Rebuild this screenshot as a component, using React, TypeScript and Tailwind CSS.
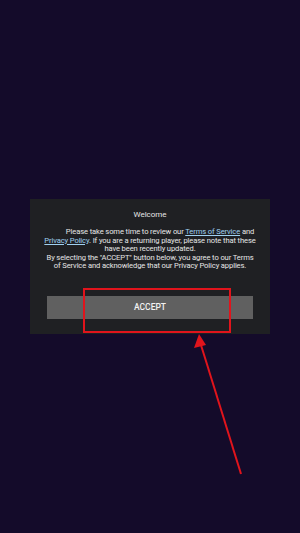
import React from "react";

export default function App() {
  return (
    <div className="relative w-[300px] h-[533px] bg-[#140b2a] overflow-hidden" style={{ fontFamily: "Roboto, 'Liberation Sans', sans-serif" }}>
      <div className="absolute left-[30px] top-[199px] w-[240px] h-[135px] bg-[#1f2023] flex flex-col items-center">
        <div className="mt-[11px] text-[8px] leading-[9px] text-[#e6e6e6]">Welcome</div>
        <p className="mt-[9px] w-[214px] text-center text-[7.6px] tracking-[-0.12px] leading-[8.6px] text-[#e6e6e6] indent-[20px]">
          Please take some time to review our <span className="text-[#9fd0f0] underline">Terms of Service</span> and <span className="text-[#9fd0f0] underline">Privacy Policy</span>. If you are a returning player, please note that these have been recently updated.
          <br />
          <span className="inline-block indent-0">By selecting the "ACCEPT" button below, you agree to our Terms of Service and acknowledge that our Privacy Policy applies.</span>
        </p>
        <div className="mt-[25px] w-[206px] h-[23px] bg-[#606060] flex items-center justify-center text-[8.5px] font-medium text-[#f2f2f2]">ACCEPT</div>
      </div>
      <div className="absolute left-[83px] top-[288px] w-[148px] h-[45px] border-2 border-[#e0141c]" />
      <svg className="absolute left-0 top-0" width="300" height="533">
        <line x1="201" y1="345" x2="241" y2="474" stroke="#e0141c" strokeWidth="2" />
        <polygon points="199,334 194,348 206,345" fill="#e0141c" />
      </svg>
    </div>
  );
}
